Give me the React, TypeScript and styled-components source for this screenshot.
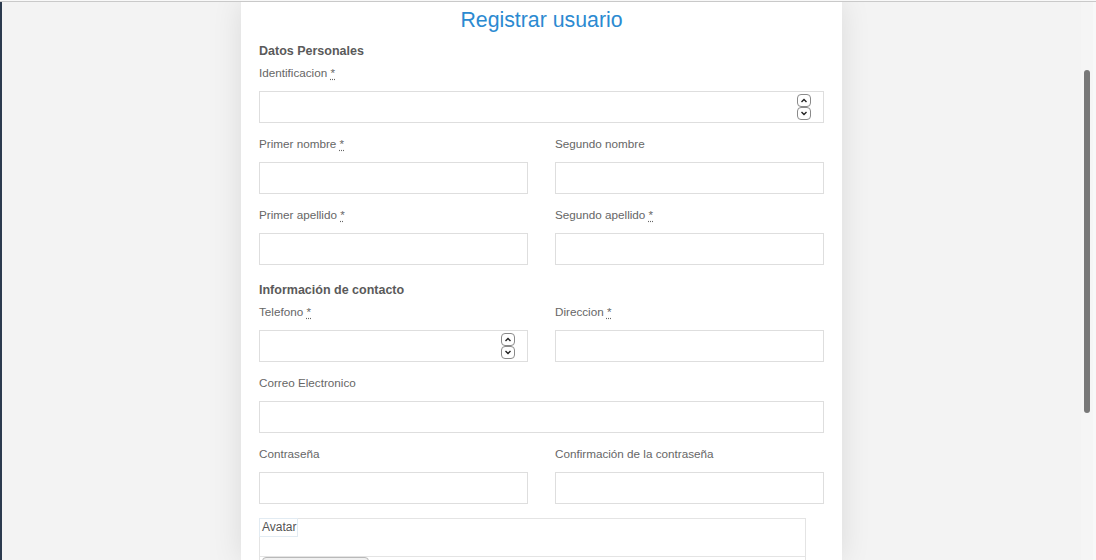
import React from "react";
import styled, { createGlobalStyle } from "styled-components";

const GlobalStyle = createGlobalStyle`
  html, body { margin: 0; padding: 0; background: #f8f8f8; }
  body { font-family: "Liberation Sans", Arial, sans-serif; overflow: hidden; }
  * { box-sizing: border-box; }
`;

const Frame = styled.div`
  display: flex;
  height: 560px;
  margin-top: 1px;
  border-top: 1px solid #c9c9c9;
  background: #f3f3f3;
  overflow: hidden;
`;

const SideStrip = styled.div`
  width: 2px;
  flex: 0 0 2px;
  background: #2b3a4e;
`;

const Main = styled.div`
  flex: 1;
  display: flex;
  justify-content: center;
  min-width: 0;
`;

const Track = styled.div`
  width: 15px;
  flex: 0 0 15px;
  background: #f5f5f5;
  border-right: 3px solid #f8f8f8;
  padding: 68px 0 0 3px;
`;

const Thumb = styled.div`
  width: 6px;
  height: 343px;
  background: #787878;
  border-radius: 3px;
`;

const Card = styled.div`
  width: 601px;
  background: #fff;
  box-shadow: 0 0 28px rgba(0, 0, 0, 0.1);
  padding: 5px 18px 0;
  display: flex;
  flex-direction: column;
`;

const Title = styled.h1`
  margin: 0 0 9px;
  font-size: 21.3px;
  line-height: 26px;
  font-weight: 400;
  color: #2b8ad1;
  text-align: center;
`;

const SectionHeading = styled.h2<{ $top?: number }>`
  margin: ${(p) => p.$top ?? 0}px 0 4px;
  font-size: 12.5px;
  line-height: 18px;
  font-weight: 700;
  color: #5a5a5a;
`;

const Row = styled.div`
  display: grid;
  grid-template-columns: 1fr 1fr;
  column-gap: 27px;
`;

const Group = styled.div`
  display: flex;
  flex-direction: column;
  margin-bottom: 12px;
`;

const Label = styled.label`
  display: block;
  font-size: 11.7px;
  line-height: 17px;
  color: #666;
  margin-bottom: 10px;
`;

const Req = styled.abbr`
  text-decoration: underline dotted;
  text-underline-offset: 2px;
  cursor: help;
`;

const InputWrap = styled.div`
  position: relative;
  height: 32px;
  border: 1px solid #dedede;
  background: #fff;
`;

const Input = styled.input`
  width: 100%;
  height: 100%;
  border: 0;
  outline: none;
  padding: 0 8px;
  font: inherit;
  font-size: 12px;
  background: transparent;
`;

const SpinBox = styled.span`
  position: absolute;
  right: 12px;
  top: 2px;
  width: 14px;
  height: 26px;
`;

const Fieldset = styled.div`
  width: 547px;
  margin-top: 2px;
  border: 1px solid #e4e4e4;
  display: flex;
  flex-direction: column;
`;

const Legend = styled.span`
  align-self: flex-start;
  font-size: 12px;
  line-height: 17px;
  color: #555;
  padding: 0 1px 0 2px;
  margin: -1px 0 0 -1px;
  border: 1px solid #e2ebf2;
`;

const FileRow = styled.div`
  margin-top: 19px;
  border-top: 1px solid #e4e4e4;
  padding: 0 0 0 2px;
`;

const FileButton = styled.button`
  width: 107px;
  height: 24px;
  border: 1px solid #b9b9b9;
  border-radius: 4px;
  background: #f0f0f0;
`;

const Spinner = () => (
  <SpinBox>
    <svg width="14" height="26" viewBox="0 0 14 26">
      <rect x="0.5" y="0.5" width="13" height="12" rx="3.5" fill="#fff" stroke="#8a8a8a" />
      <rect x="0.5" y="13.5" width="13" height="12" rx="3.5" fill="#fff" stroke="#8a8a8a" />
      <path d="M4.5 8 L7 5.5 L9.5 8" fill="none" stroke="#222" strokeWidth="1.4" />
      <path d="M4.5 18 L7 20.5 L9.5 18" fill="none" stroke="#222" strokeWidth="1.4" />
    </svg>
  </SpinBox>
);

type FieldProps = { label: string; required?: boolean; number?: boolean; type?: string };

const Field = ({ label, required, number, type }: FieldProps) => (
  <Group>
    <Label>
      {label}
      {required && (
        <>
          {" "}
          <Req title="requerido">*</Req>
        </>
      )}
    </Label>
    <InputWrap>
      <Input type={type ?? "text"} />
      {number && <Spinner />}
    </InputWrap>
  </Group>
);

export default function App() {
  return (
    <>
      <GlobalStyle />
      <Frame>
        <SideStrip />
        <Main>
          <Card>
            <Title>Registrar usuario</Title>
            <SectionHeading>Datos Personales</SectionHeading>
            <Field label="Identificacion" required number />
            <Row>
              <Field label="Primer nombre" required />
              <Field label="Segundo nombre" />
            </Row>
            <Row>
              <Field label="Primer apellido" required />
              <Field label="Segundo apellido" required />
            </Row>
            <SectionHeading $top={4}>Información de contacto</SectionHeading>
            <Row>
              <Field label="Telefono" required number />
              <Field label="Direccion" required />
            </Row>
            <Field label="Correo Electronico" type="email" />
            <Row>
              <Field label="Contraseña" type="password" />
              <Field label="Confirmación de la contraseña" type="password" />
            </Row>
            <Fieldset>
              <Legend>Avatar</Legend>
              <FileRow>
                <FileButton type="button" aria-label="Seleccionar archivo" />
              </FileRow>
            </Fieldset>
          </Card>
        </Main>
        <Track>
          <Thumb />
        </Track>
      </Frame>
    </>
  );
}
